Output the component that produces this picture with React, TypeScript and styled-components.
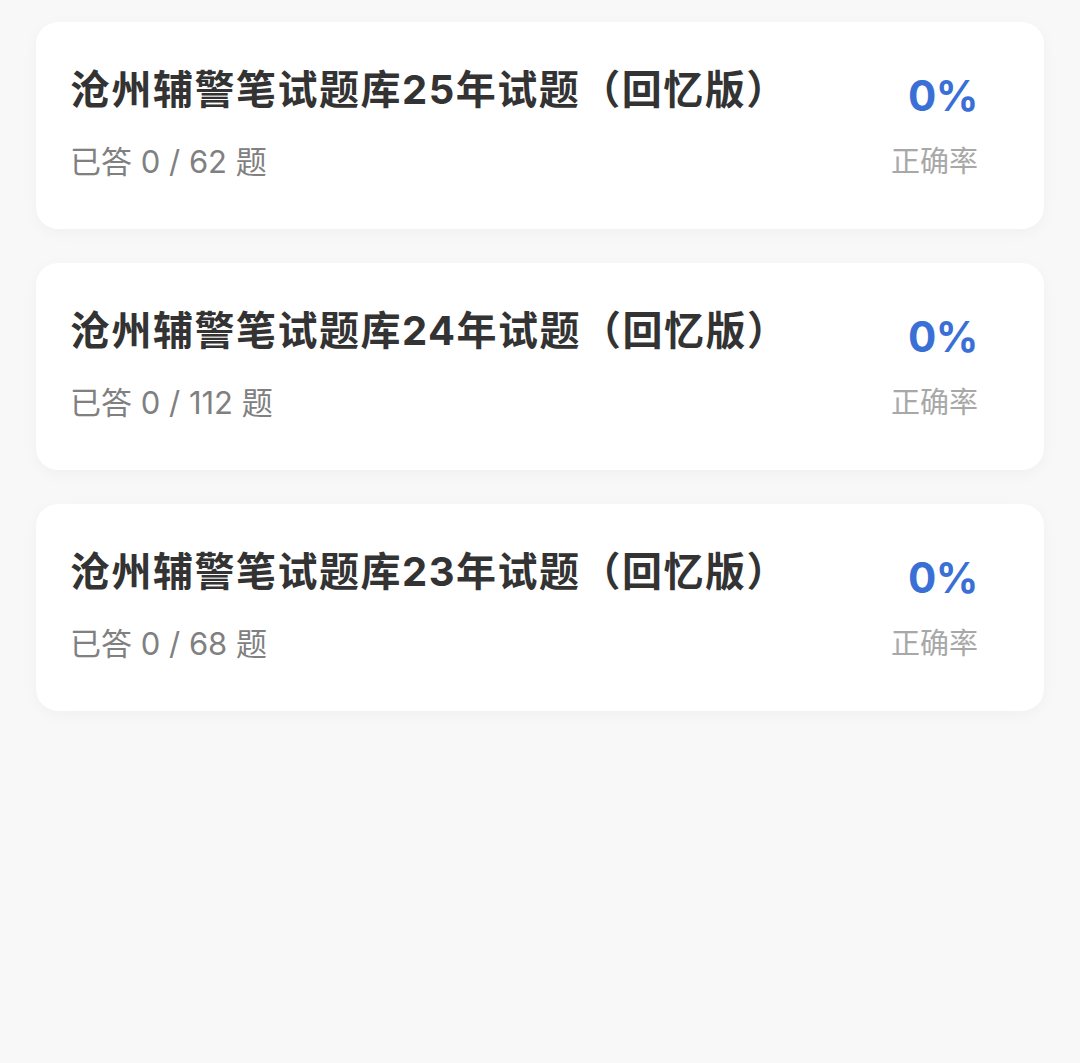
import React from 'react';
import styled, { createGlobalStyle } from 'styled-components';

const papers = [
  { title: '沧州辅警笔试题库25年试题（回忆版）', done: 0, total: 62, rate: 0 },
  { title: '沧州辅警笔试题库24年试题（回忆版）', done: 0, total: 112, rate: 0 },
  { title: '沧州辅警笔试题库23年试题（回忆版）', done: 0, total: 68, rate: 0 },
];

function App() {
  return (
    <>
      <GlobalStyle />
      <Page>
        <List>
          {papers.map((p) => (
            <Card key={p.title}>
              <Info>
                <Title>{p.title}</Title>
                <Progress>
                  已答 {p.done} / {p.total} 题
                </Progress>
              </Info>
              <Score>
                <Rate>{p.rate}%</Rate>
                <RateLabel>正确率</RateLabel>
              </Score>
            </Card>
          ))}
        </List>
      </Page>
    </>
  );
}

export default App;

const GlobalStyle = createGlobalStyle`
    html, body {
        margin: 0;
        padding: 0;
        background: #f8f8f8;
    }
    body {
        font-family: Inter, "Noto Sans CJK SC", sans-serif;
    }
`;

const Page = styled.main`
    background: #f8f8f8;
    min-height: 1063px;
    padding: 22px 36px;
    box-sizing: border-box;
`;

const List = styled.div`
    display: flex;
    flex-direction: column;
    gap: 34px;
`;

const Card = styled.section`
    background: #ffffff;
    border-radius: 22px;
    box-shadow: 0 4px 16px rgba(0, 0, 0, 0.035);
    display: flex;
    align-items: flex-start;
    justify-content: space-between;
    height: 207px;
    box-sizing: border-box;
    padding: 46px 66px 0 34px;
`;

const Info = styled.div`
    display: flex;
    flex-direction: column;
    gap: 30px;
`;

const Title = styled.div`
    color: #333333;
    font-family: Inter, "Noto Sans CJK SC", sans-serif;
    font-size: 40px;
    font-weight: 700;
    line-height: 44px;
    letter-spacing: 1.5px;
    white-space: nowrap;
`;

const Progress = styled.div`
    color: #808080;
    font-family: Inter, "Noto Sans CJK SC", sans-serif;
    font-size: 31px;
    line-height: 40px;
`;

const Score = styled.div`
    display: flex;
    flex-direction: column;
    align-items: flex-end;
    gap: 23px;
    padding-top: 6px;
`;

const Rate = styled.div`
    color: #3a70d6;
    font-family: Inter, sans-serif;
    font-size: 42px;
    font-weight: 700;
    line-height: 44px;
    letter-spacing: -0.5px;
`;

const RateLabel = styled.div`
    color: #a8a8a8;
    font-family: "Noto Sans CJK SC", sans-serif;
    font-size: 29px;
    line-height: 36px;
`;
